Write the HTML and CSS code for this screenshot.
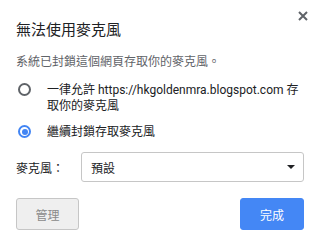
FILE: index.html
```html
<!DOCTYPE html>
<html lang="zh-Hant">
<head>
  <meta charset="UTF-8" />
  <title>無法使用麥克風</title>
  <link rel="stylesheet" href="styles.css">
</head>
<body>
  <div class="dialog">
    <div class="header">
      <h1 class="title">無法使用麥克風</h1>
      <button class="close" aria-label="關閉">
        <svg width="10" height="10" viewBox="0 0 10 10">
          <path d="M1 1L9 9M9 1L1 9" stroke="#5f6368" stroke-width="2" />
        </svg>
      </button>
    </div>
    <p class="desc">系統已封鎖這個網頁存取你的麥克風。</p>

    <label class="option">
      <span class="radio"></span>
      <span class="option-text">一律允許 https://hkgoldenmra.blogspot.com 存取你的麥克風</span>
    </label>
    <label class="option">
      <span class="radio checked"></span>
      <span class="option-text">繼續封鎖存取麥克風</span>
    </label>

    <div class="device-row">
      <span class="device-label">麥克風：</span>
      <div class="select">
        <span>預設</span>
        <span class="arrow"></span>
      </div>
    </div>

    <div class="actions">
      <button class="btn btn-manage">管理</button>
      <button class="btn btn-done">完成</button>
    </div>
  </div>
</body>
</html>
```

FILE: styles.css
```css
body {
  margin: 0;
  padding: 0;
  background: #fff;
  font-family: Roboto, "Noto Sans CJK TC", sans-serif;
  font-size: 12px;
  color: #202124;
}

.dialog {
  padding: 0 16px 16px 16px;
}

.header {
  display: flex;
  justify-content: space-between;
  align-items: flex-start;
  padding-top: 10px;
  margin-right: -5px;
}

.title {
  margin: 10px 0 0 0;
  font-size: 15px;
  font-weight: normal;
  line-height: 20px;
  color: #202124;
}

.close {
  border: none;
  background: none;
  padding: 0;
  width: 12px;
  height: 12px;
  display: flex;
  align-items: center;
  justify-content: center;
  cursor: pointer;
}

.desc {
  margin: 13px 0 0 0;
  line-height: 18px;
  color: #5f6368;
}

.option {
  display: flex;
  align-items: flex-start;
  margin-top: 11px;
  line-height: 16px;
  color: #202124;
}

.option + .option {
  margin-top: 10px;
}

.radio {
  flex: none;
  box-sizing: border-box;
  width: 13px;
  height: 13px;
  margin: 1px 16px 0 2px;
  border: 2px solid #5f6368;
  border-radius: 50%;
  position: relative;
}

.radio.checked {
  border-color: #4285f4;
}

.radio.checked::after {
  content: "";
  position: absolute;
  left: 1.5px;
  top: 1.5px;
  width: 6px;
  height: 6px;
  border-radius: 50%;
  background: #4285f4;
}

.device-row {
  display: flex;
  align-items: center;
  margin-top: 12px;
}

.device-label {
  width: 65px;
  flex: none;
  color: #202124;
}

.select {
  flex: 1;
  height: 30px;
  box-sizing: border-box;
  border: 1px solid #c6c6c6;
  border-radius: 3px;
  display: flex;
  align-items: center;
  justify-content: space-between;
  padding: 0 8px 0 9px;
}

.arrow {
  width: 0;
  height: 0;
  border-left: 4px solid transparent;
  border-right: 4px solid transparent;
  border-top: 4px solid #202124;
}

.actions {
  display: flex;
  justify-content: space-between;
  margin-top: 16px;
}

.btn {
  width: 63px;
  height: 32px;
  border-radius: 3px;
  font-family: inherit;
  font-size: 12px;
  cursor: pointer;
}

.btn-manage {
  background: #efefef;
  border: 1px solid #c6c6c6;
  color: #8a8a8a;
}

.btn-done {
  width: 64px;
  background: #4487f5;
  border: 1px solid #4487f5;
  color: #fff;
}
```
